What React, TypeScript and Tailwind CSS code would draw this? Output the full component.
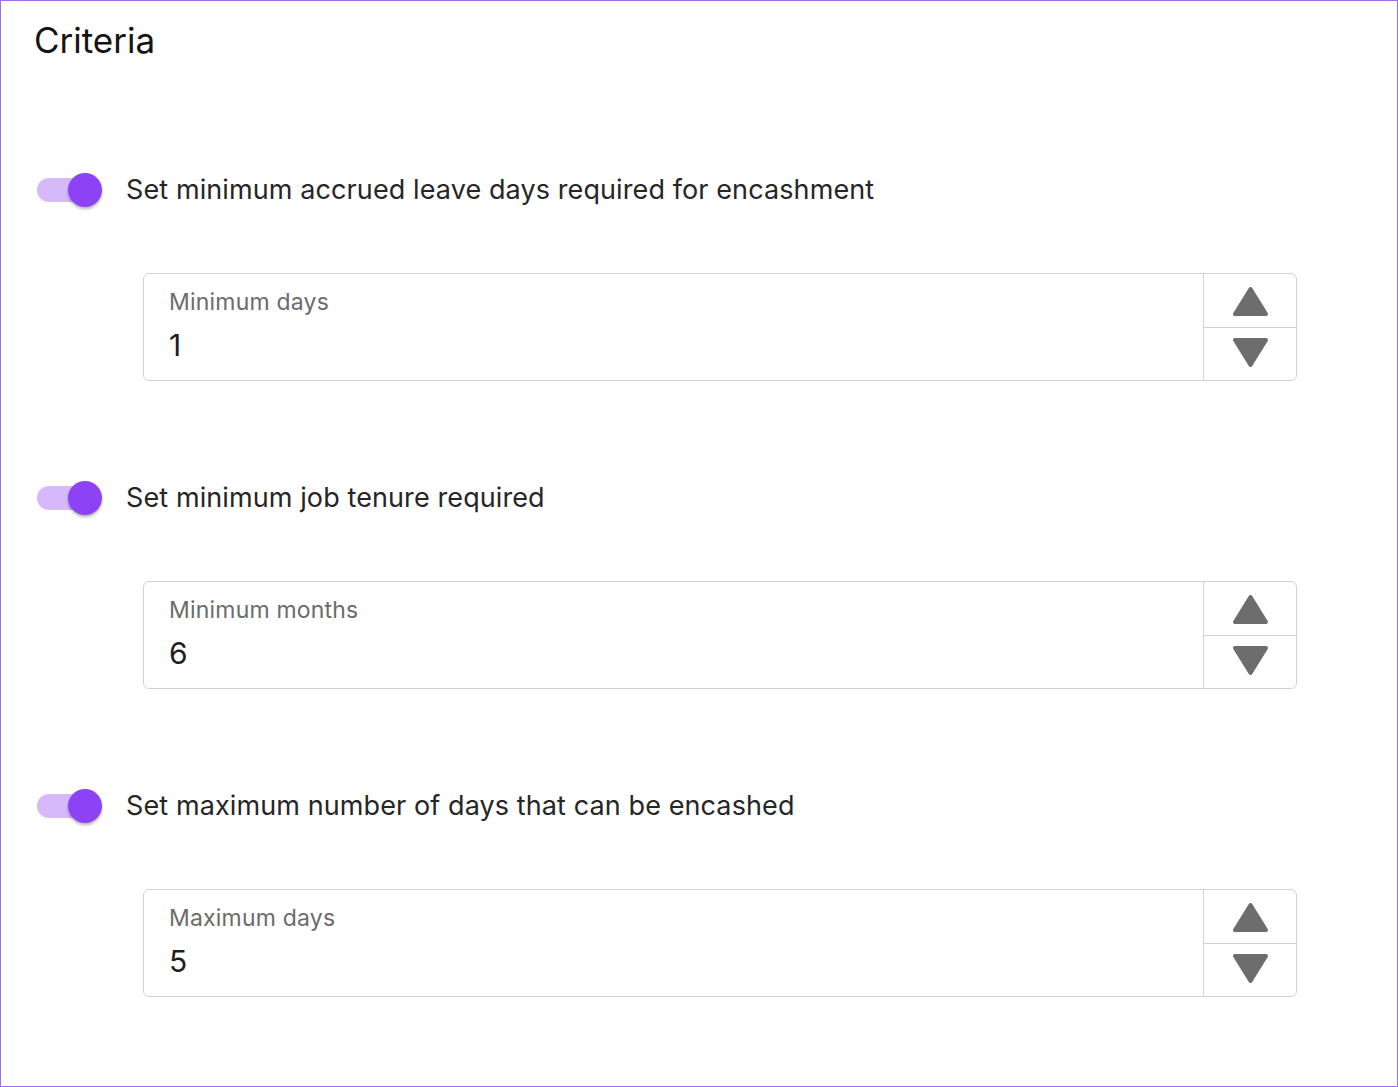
import React from "react";

const criteria = [
  { label: "Set minimum accrued leave days required for encashment", field: "Minimum days", value: "1" },
  { label: "Set minimum job tenure required", field: "Minimum months", value: "6" },
  { label: "Set maximum number of days that can be encashed", field: "Maximum days", value: "5" },
];

function Toggle() {
  return (
    <div className="relative w-[66px] h-[36px] shrink-0">
      <div className="absolute left-[1px] top-[6px] w-[60px] h-[24px] rounded-full bg-[#d5b9fb]" />
      <div className="absolute right-0 top-[1px] w-[34px] h-[34px] rounded-full bg-[#8d43f5] shadow-[0_2px_3px_rgba(0,0,0,0.3)]" />
    </div>
  );
}

function Triangle({ down }: { down?: boolean }) {
  return (
    <svg width="37" height="31" viewBox="0 0 37 31">
      <path
        d={down ? "M3 3 L34 3 L18.5 28 Z" : "M3 28 L34 28 L18.5 3 Z"}
        fill="#6d6d6d"
        stroke="#6d6d6d"
        strokeWidth={4}
        strokeLinejoin="round"
      />
    </svg>
  );
}

function NumberField({ field, value }: { field: string; value: string }) {
  return (
    <div className="ml-[107px] w-[1154px] h-[108px] flex border border-[#d2d2d2] rounded-[6px] bg-white">
      <div className="flex-1 pl-[25px] pt-[15px]">
        <div className="text-[23px] leading-[26px] tracking-[0.2px] text-[#6b6b6b]">{field}</div>
        <div className="mt-[13px] text-[30px] leading-[34px] text-[#1e1e1e]">{value}</div>
      </div>
      <div className="w-[93px] flex flex-col border-l border-[#d2d2d2]">
        <div className="flex-1 flex items-center justify-center border-b border-[#d2d2d2] pt-[2px]">
          <Triangle />
        </div>
        <div className="flex-1 flex items-center justify-center pb-[2px]">
          <Triangle down />
        </div>
      </div>
    </div>
  );
}

export default function App() {
  return (
    <div
      className="w-[1398px] h-[1087px] bg-white border border-[#a06cf0] pl-[35px] pt-[19px]"
      style={{ fontFamily: "Inter, 'Liberation Sans', sans-serif" }}
    >
      <h1 className="-ml-[2px] text-[35px] leading-[40px] text-[#141414]">Criteria</h1>
      <div className="mt-[110px] flex flex-col gap-[97px]">
        {criteria.map((c) => (
          <div key={c.field} className="flex flex-col gap-[63px]">
            <div className="flex items-center h-[40px]">
              <Toggle />
              <span className="ml-[24px] text-[27px] leading-[40px] tracking-[0.1px] text-[#262626]">{c.label}</span>
            </div>
            <NumberField field={c.field} value={c.value} />
          </div>
        ))}
      </div>
    </div>
  );
}
